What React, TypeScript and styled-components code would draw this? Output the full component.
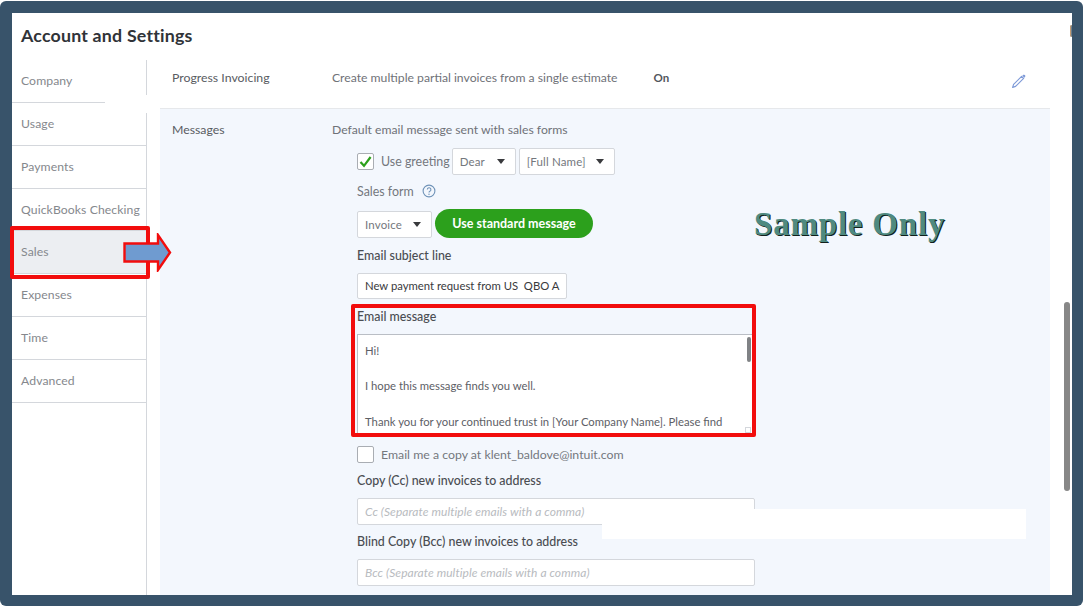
import React from 'react';
import styled, { createGlobalStyle } from 'styled-components';

const GlobalStyle = createGlobalStyle`
  html, body {
    margin: 0;
    padding: 0;
    background: #fff;
  }
  body {
    font-family: 'Lato', 'Open Sans', sans-serif;
    color: #5d6066;
  }
`;

const Frame = styled.div`
  box-sizing: border-box;
  width: 1083px;
  height: 605px;
  margin-top: 1px;
  padding: 12px 11px 11px 12px;
  background: #38536a;
  border-radius: 6px;
  overflow: hidden;
`;

const Panel = styled.div`
  position: relative;
  display: flex;
  flex-direction: column;
  height: 100%;
  background: #fff;
`;

const Avatar = styled.span`
  position: absolute;
  top: 12px;
  right: 0;
  width: 2px;
  height: 12px;
  border-radius: 6px 0 0 6px;
  background: #6d7f8c;
  box-shadow: inset 1px 0 0 #c49a70;
`;

const Title = styled.h1`
  margin: 0;
  height: 47px;
  padding: 0 0 0 9px;
  font-size: 17.8px;
  line-height: 45px;
  font-weight: 700;
  color: #303338;
  letter-spacing: 0.2px;
`;

const Body = styled.div`
  display: flex;
  flex: 1;
  min-height: 0;
`;

const Sidebar = styled.nav`
  flex: none;
  display: flex;
  flex-direction: column;
  box-sizing: border-box;
  width: 135px;
  background: linear-gradient(#d4d7dc, #d4d7dc) right 53px / 1px 100% no-repeat;
`;

const NavItem = styled.div<{ $active?: boolean }>`
  box-sizing: border-box;
  height: 42.8px;
  padding-left: 9px;
  font-size: 12.2px;
  line-height: 41px;
  color: #85888d;
  letter-spacing: 0.1px;
  white-space: nowrap;
  background: ${(p) => (p.$active ? '#eceef2' : 'transparent')};
  border-bottom: 1px solid #d4d7dc;
`;

const CompanyItem = styled.div`
  box-sizing: border-box;
  width: 135px;
  height: 43px;
  padding-left: 9px;
  font-size: 12.2px;
  line-height: 42px;
  color: #85888d;
  letter-spacing: 0.1px;
  background:
    linear-gradient(#d4d7dc, #d4d7dc) right top / 1px 35px no-repeat,
    linear-gradient(#d4d7dc, #d4d7dc) left bottom / 93px 1px no-repeat,
    #fff;
`;

const Main = styled.main`
  flex: 1;
  display: flex;
  flex-direction: column;
  margin-left: 13px;
  margin-right: 22px;
  min-width: 0;
`;

const SettingRow = styled.div`
  position: relative;
  flex: none;
  display: grid;
  grid-template-columns: 160px 1fr;
  box-sizing: border-box;
  height: 49px;
  padding: 9px 0 0 12px;
  border-bottom: 1px solid #e6e8eb;
`;

const RowLabel = styled.div`
  font-size: 12.3px;
  line-height: 18px;
  color: #595c62;
`;

const RowValue = styled.div`
  display: flex;
  font-size: 12.2px;
  line-height: 18px;
  color: #6f7278;
`;

const OnText = styled.span`
  margin-left: 36px;
  font-size: 11.5px;
  font-weight: 700;
  color: #53565c;
`;

const EditIcon = styled.svg`
  position: absolute;
  top: 13px;
  right: 23px;
  width: 16px;
  height: 16px;
`;

const MessagesRow = styled.section`
  flex: 1;
  min-height: 0;
  display: grid;
  grid-template-columns: 160px 1fr;
  align-content: start;
  padding: 12px 0 0 12px;
  background: #f3f7fd;
  font-size: 12.4px;
`;

const Form = styled.div`
  display: flex;
  flex-direction: column;
  grid-column: 2;
  margin-left: 25px;
  width: 398px;
`;

const Line = styled.div<{ $h: number; $mt?: number }>`
  display: flex;
  align-items: center;
  flex: none;
  height: ${(p) => p.$h}px;
  margin-top: ${(p) => p.$mt ?? 0}px;
`;

const ButtonLine = styled(Line)`
  align-items: flex-end;
`;

const Check = styled.span`
  box-sizing: border-box;
  flex: none;
  display: flex;
  align-items: center;
  justify-content: center;
  width: 17px;
  height: 17px;
  margin-right: 7px;
  background: #fff;
  border: 1px solid #a9adb3;
  border-radius: 2px;
`;

const CheckLabel = styled.span`
  color: #74777d;
`;

const CopyLabel = styled(CheckLabel)`
  font-size: 12.3px;
`;

const SelectBox = styled.div<{ $w: number; $ml?: number }>`
  box-sizing: border-box;
  display: flex;
  align-items: center;
  justify-content: space-between;
  width: ${(p) => p.$w}px;
  height: 27px;
  margin-left: ${(p) => p.$ml ?? 0}px;
  padding: 0 10px 0 7px;
  background: #fff;
  border: 1px solid #d4d7dc;
  border-radius: 2px;
  font-size: 11.5px;
  color: #74777d;
  letter-spacing: 0.15px;
`;

const Caret = styled.span`
  width: 0;
  height: 0;
  border-left: 4px solid transparent;
  border-right: 4px solid transparent;
  border-top: 5px solid #393a3d;
`;

const PlainLabel = styled.span`
  color: #74777d;
`;

const FieldLabel = styled.div`
  font-weight: 500;
  color: #4a4d52;
`;

const HelpIcon = styled.svg`
  width: 14px;
  height: 14px;
  margin-left: 8px;
`;

const GreenButton = styled.button`
  width: 158px;
  height: 29px;
  margin-left: 3px;
  padding: 0;
  border: 0;
  border-radius: 15px;
  background: #2ca01c;
  color: #fff;
  font-family: inherit;
  font-size: 12.5px;
  font-weight: 700;
`;

const SubjectInput = styled.div`
  box-sizing: border-box;
  width: 210px;
  height: 26px;
  padding: 0 0 0 7px;
  background: #fff;
  border: 1px solid #d4d7dc;
  border-radius: 2px;
  font-size: 11.3px;
  line-height: 24px;
  color: #393a3d;
  white-space: pre;
`;

const MessageBox = styled.div`
  position: relative;
  box-sizing: border-box;
  flex: none;
  height: 99px;
  margin-top: 10px;
  padding: 7px 0 0 7px;
  background: #fff;
  border: 1px solid #babec5;
  border-bottom: 0;
  overflow: hidden;
  font-size: 11.3px;
  line-height: 17.7px;
  color: #5d6066;
`;

const MessageLine = styled.p`
  margin: 0;
  min-height: 17.7px;
  white-space: nowrap;
`;

const Thumb = styled.span`
  position: absolute;
  top: 2px;
  right: 3px;
  width: 4px;
  height: 25px;
  border-radius: 2px;
  background: #808285;
`;

const ResizeCorner = styled.span`
  position: absolute;
  right: 3px;
  bottom: 0;
  width: 4px;
  height: 4px;
  border: 1px solid #d4d7dc;
  background: #fff;
`;

const TextInput = styled.div`
  box-sizing: border-box;
  flex: none;
  width: 398px;
  height: 27px;
  margin-top: 10px;
  padding-left: 7px;
  background: #fff;
  border: 1px solid #d4d7dc;
  border-radius: 2px;
  font-size: 12px;
  line-height: 26px;
  font-style: italic;
  color: #b8bbc0;
  letter-spacing: 0.07px;
`;

const RedBox = styled.div`
  position: absolute;
  box-sizing: border-box;
  border: 4px solid #f20d0d;
  border-radius: 2px;
  pointer-events: none;
`;

const SalesHighlight = styled(RedBox)`
  left: -2px;
  top: 213px;
  width: 140px;
  height: 53px;
`;

const MessageHighlight = styled(RedBox)`
  left: 339px;
  top: 291px;
  width: 405px;
  height: 133px;
`;

const ArrowIcon = styled.svg`
  position: absolute;
  left: 111px;
  top: 220px;
  width: 49px;
  height: 39px;
`;

const Redaction = styled.div`
  position: absolute;
  left: 590px;
  top: 496px;
  width: 424px;
  height: 30px;
  background: #fff;
`;

const Watermark = styled.div`
  position: absolute;
  left: 742px;
  top: 191px;
  font-family: 'Liberation Serif', serif;
  font-size: 33px;
  line-height: 40px;
  font-weight: 700;
  letter-spacing: 0.8px;
  color: #4f8a80;
  text-shadow: 1px 1px 0 #10201c;
  white-space: nowrap;
`;

const Scrollbar = styled.div`
  position: absolute;
  right: 2px;
  top: 289px;
  width: 6px;
  height: 189px;
  border-radius: 3px;
  background: #878787;
`;

const navItems = ['Usage', 'Payments', 'QuickBooks Checking', 'Sales', 'Expenses', 'Time', 'Advanced'];

function App() {
  return (
    <>
      <GlobalStyle />
      <Frame>
        <Panel>
          <Avatar />
          <Title>Account and Settings</Title>
          <Body>
            <Sidebar>
              <CompanyItem>Company</CompanyItem>
              {navItems.map((item) => (
                <NavItem key={item} $active={item === 'Sales'}>{item}</NavItem>
              ))}
            </Sidebar>
            <Main>
              <SettingRow>
                <RowLabel>Progress Invoicing</RowLabel>
                <RowValue>
                  Create multiple partial invoices from a single estimate
                  <OnText>On</OnText>
                </RowValue>
                <EditIcon viewBox="0 0 16 16" fill="none">
                  <path d="M10.6 3.4 2.6 11.4 1.6 14.4 4.6 13.4 12.6 5.4Z" stroke="#7f9bd8" strokeWidth="1.2" strokeLinejoin="round" />
                  <path d="M11.3 2.7 12.2 1.8a1.5 1.5 0 0 1 2 2L13.3 4.7Z" fill="#7f9bd8" />
                </EditIcon>
              </SettingRow>
              <MessagesRow>
                <RowLabel>Messages</RowLabel>
                <RowValue>Default email message sent with sales forms</RowValue>
                <Form>
                  <Line $h={27} $mt={9}>
                    <Check>
                      <svg width="13" height="13" viewBox="0 0 13 13" fill="none">
                        <path d="M1.5 7 5 10.8 11.6 2" stroke="#2ca01c" strokeWidth="2.2" />
                      </svg>
                    </Check>
                    <CheckLabel>Use greeting</CheckLabel>
                    <SelectBox $w={64} $ml={2}>Dear<Caret /></SelectBox>
                    <SelectBox $w={96} $ml={3}>[Full Name]<Caret /></SelectBox>
                  </Line>
                  <Line $h={16} $mt={8}>
                    <PlainLabel>Sales form</PlainLabel>
                    <HelpIcon viewBox="0 0 14 14" fill="none">
                      <circle cx="7" cy="7" r="5.9" stroke="#6f93b8" strokeWidth="1.1" />
                      <path d="M5.3 5.6a1.8 1.8 0 1 1 2.6 1.6c-.6.3-.9.6-.9 1.3" stroke="#6f93b8" strokeWidth="1.1" />
                      <circle cx="7" cy="10.2" r=".7" fill="#6f93b8" />
                    </HelpIcon>
                  </Line>
                  <ButtonLine $h={29} $mt={10}>
                    <SelectBox $w={75}>Invoice<Caret /></SelectBox>
                    <GreenButton type="button">Use standard message</GreenButton>
                  </ButtonLine>
                  <Line $h={16} $mt={9}>
                    <FieldLabel>Email subject line</FieldLabel>
                  </Line>
                  <Line $h={26} $mt={10}>
                    <SubjectInput>New payment request from US  QBO A</SubjectInput>
                  </Line>
                  <Line $h={16} $mt={9}>
                    <FieldLabel>Email message</FieldLabel>
                  </Line>
                  <MessageBox>
                    <MessageLine>Hi!</MessageLine>
                    <MessageLine />
                    <MessageLine>I hope this message finds you well.</MessageLine>
                    <MessageLine />
                    <MessageLine>Thank you for your continued trust in [Your Company Name]. Please find</MessageLine>
                    <Thumb />
                    <ResizeCorner />
                  </MessageBox>
                  <Line $h={17} $mt={13}>
                    <Check />
                    <CopyLabel>Email me a copy at klent_baldove@intuit.com</CopyLabel>
                  </Line>
                  <Line $h={16} $mt={9}>
                    <FieldLabel>Copy (Cc) new invoices to address</FieldLabel>
                  </Line>
                  <TextInput>Cc (Separate multiple emails with a comma)</TextInput>
                  <Line $h={16} $mt={8}>
                    <FieldLabel>Blind Copy (Bcc) new invoices to address</FieldLabel>
                  </Line>
                  <TextInput>Bcc (Separate multiple emails with a comma)</TextInput>
                </Form>
              </MessagesRow>
            </Main>
          </Body>
          <SalesHighlight />
          <ArrowIcon viewBox="0 0 49 39">
            <path d="M1.5 10.5H35V2L47 19.5 35 37V28.5H1.5Z" fill="#6f9bd0" stroke="#f20d0d" strokeWidth="2.4" />
          </ArrowIcon>
          <MessageHighlight />
          <Redaction />
          <Watermark>Sample Only</Watermark>
          <Scrollbar />
        </Panel>
      </Frame>
    </>
  );
}

export default App;
